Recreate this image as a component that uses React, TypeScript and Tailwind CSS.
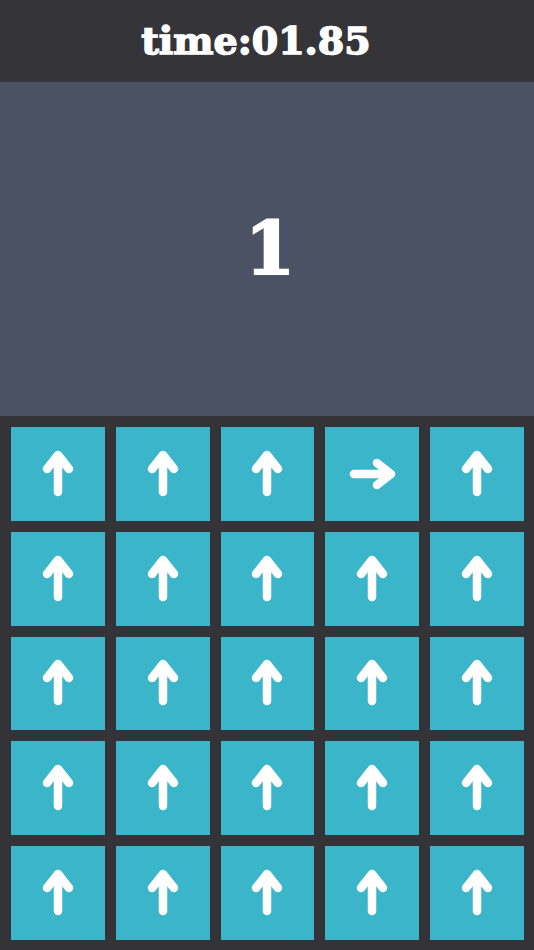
const ROWS = 5;
const COLS = 5;

// direzioni: solo la cella (0,3) punta a destra
const cells = Array.from({ length: ROWS * COLS }, (_, i) =>
  i === 3 ? 'right' : 'up',
);

function Arrow({ dir }: { dir: string }) {
  return (
    <svg
      width="50"
      height="50"
      viewBox="0 0 50 50"
      className={dir === 'right' ? 'rotate-90' : ''}
      fill="none"
      stroke="white"
      strokeWidth="8.5"
      strokeLinecap="round"
      strokeLinejoin="round"
    >
      <line x1="25" y1="7" x2="25" y2="43" />
      <polyline points="14,20 25,6 36,20" />
    </svg>
  );
}

export default function App() {
  return (
    <div
      className="flex h-[950px] w-[534px] flex-col bg-[#343438]"
      style={{ fontFamily: '"DejaVu Serif", "Liberation Serif", serif' }}
    >
      <header className="flex h-[82px] items-center justify-center bg-[#343439] pr-[22px]">
        <span className="text-[38px] font-bold leading-none text-white [-webkit-text-stroke:1.5px_white]">
          time:01.85
        </span>
      </header>

      <section className="flex h-[334px] items-center justify-center bg-[#4b5264] pl-[6px]">
        <span className="text-[72px] font-bold leading-none text-white [-webkit-text-stroke:2px_white]">
          1
        </span>
      </section>

      <div className="grid flex-1 grid-cols-5 grid-rows-5 gap-[11px] p-[11px] pr-[10px] pb-[10px]">
        {cells.map((d, i) => (
          <div key={i} className="flex items-center justify-center bg-[#3ab5ca]">
            <Arrow dir={d} />
          </div>
        ))}
      </div>
    </div>
  );
}
